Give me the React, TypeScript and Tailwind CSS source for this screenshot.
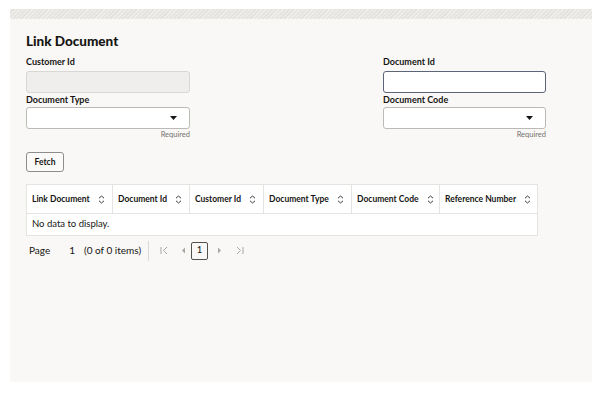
import React from "react";

const font = { fontFamily: "Lato, 'Noto Sans', sans-serif" };

function SortIcon() {
  return (
    <svg width="7" height="9" viewBox="0 0 7 9" className="ml-[8px] shrink-0">
      <path d="M1 3.2 L3.5 1 L6 3.2" fill="none" stroke="#3a3835" strokeWidth="1" />
      <path d="M1 5.8 L3.5 8 L6 5.8" fill="none" stroke="#3a3835" strokeWidth="1" />
    </svg>
  );
}

function Caret() {
  return (
    <svg width="7" height="4" viewBox="0 0 7 4">
      <path d="M0 0 H7 L3.5 4 Z" fill="#161513" />
    </svg>
  );
}

function SelectBox() {
  return (
    <div className="flex h-[22px] items-center justify-end rounded-[3px] border border-[#bcbab6] bg-white pr-[12px]">
      <Caret />
    </div>
  );
}

const columns = [
  { label: "Link Document", w: "w-[86px]" },
  { label: "Document Id", w: "w-[77px]" },
  { label: "Customer Id", w: "w-[74px]" },
  { label: "Document Type", w: "w-[88px]" },
  { label: "Document Code", w: "w-[88px]" },
  { label: "Reference Number", w: "flex-1" },
];

export default function App() {
  return (
    <div className="h-[393px] w-[596px] bg-white pt-[9px] pl-[10px] text-[#161513]" style={font}>
      <div className="flex h-[373px] w-[582px] flex-col bg-[#f9f8f6]">
        {/* textured strip */}
        <div className="h-[10px] w-full bg-[repeating-linear-gradient(135deg,#e9e7e4_0px,#e9e7e4_1px,#f0eeeb_1px,#f0eeeb_2px,#e4e2df_2px,#e4e2df_3px)]" />

        <div className="flex flex-col pl-[16px]">
          <h1 className="mt-[13px] h-[19px] text-[13.5px] leading-[19px] font-black">Link Document</h1>

          {/* form */}
          <div className="mt-[5px] grid grid-cols-[164px_163px] gap-x-[193px]">
            <div className="flex flex-col">
              <label className="h-[12px] text-[9px] leading-[12px] font-bold">Customer Id</label>
              <div className="mt-[3px] h-[22px] rounded-[3px] border border-[#d9d7d3] bg-[#efeeec]" />
              <label className="mt-[1px] h-[12px] text-[9px] leading-[12px] font-bold">Document Type</label>
              <div className="mt-[1px]">
                <SelectBox />
              </div>
              <div className="mt-[1px] h-[10px] text-right text-[7.5px] leading-[10px] text-[#75726e]">Required</div>
            </div>
            <div className="flex flex-col">
              <label className="h-[12px] text-[9px] leading-[12px] font-bold">Document Id</label>
              <div className="mt-[3px] h-[22px] rounded-[3px] border-[1.5px] border-[#5b6577] bg-white" />
              <label className="mt-[1px] h-[12px] text-[9px] leading-[12px] font-bold">Document Code</label>
              <div className="mt-[1px]">
                <SelectBox />
              </div>
              <div className="mt-[1px] h-[10px] text-right text-[7.5px] leading-[10px] text-[#75726e]">Required</div>
            </div>
          </div>

          {/* fetch */}
          <button className="mt-[12px] flex h-[20px] w-[38px] items-center justify-center rounded-[3px] border border-[#8f8d89] bg-[#fbfaf9] text-[8.5px] font-bold">
            Fetch
          </button>

          {/* table */}
          <div className="mt-[12px] w-[512px] border border-[#e6e4e1] bg-white">
            <div className="flex h-[29px] border-b border-[#e6e4e1]">
              {columns.map((c, i) => (
                <div
                  key={c.label}
                  className={`${c.w} flex items-center pl-[5px] text-[8.5px] font-bold ${i < columns.length - 1 ? "border-r border-[#e6e4e1]" : ""}`}
                >
                  {c.label}
                  <SortIcon />
                </div>
              ))}
            </div>
            <div className="flex h-[21px] items-center pl-[5px] text-[9.5px]">No data to display.</div>
          </div>

          {/* pagination */}
          <div className="mt-[2px] flex h-[25px] items-center text-[10px]">
            <span className="ml-[3px]">Page</span>
            <span className="ml-[19px]">1</span>
            <span className="ml-[9px]">(0 of 0 items)</span>
            <div className="ml-[7px] h-[20px] w-px bg-[#dcdad7]" />
            <svg width="9" height="9" viewBox="0 0 9 9" className="ml-[11px]">
              <path d="M1 1 V8" stroke="#a9a7a3" strokeWidth="1" />
              <path d="M7 1 L3.5 4.5 L7 8" fill="none" stroke="#a9a7a3" strokeWidth="1" />
            </svg>
            <svg width="5" height="7" viewBox="0 0 5 7" className="ml-[12px]">
              <path d="M4 0.5 L1 3.5 L4 6.5 Z" fill="#a9a7a3" />
            </svg>
            <div className="ml-[5px] flex h-[18px] w-[17px] items-center justify-center rounded-[2px] border border-[#55524e] text-[9.5px]">
              1
            </div>
            <svg width="5" height="7" viewBox="0 0 5 7" className="ml-[9px]">
              <path d="M1 0.5 L4 3.5 L1 6.5 Z" fill="#a9a7a3" />
            </svg>
            <svg width="9" height="9" viewBox="0 0 9 9" className="ml-[13px]">
              <path d="M2 1 L5.5 4.5 L2 8" fill="none" stroke="#a9a7a3" strokeWidth="1" />
              <path d="M8 1 V8" stroke="#a9a7a3" strokeWidth="1" />
            </svg>
          </div>
        </div>
      </div>
    </div>
  );
}
